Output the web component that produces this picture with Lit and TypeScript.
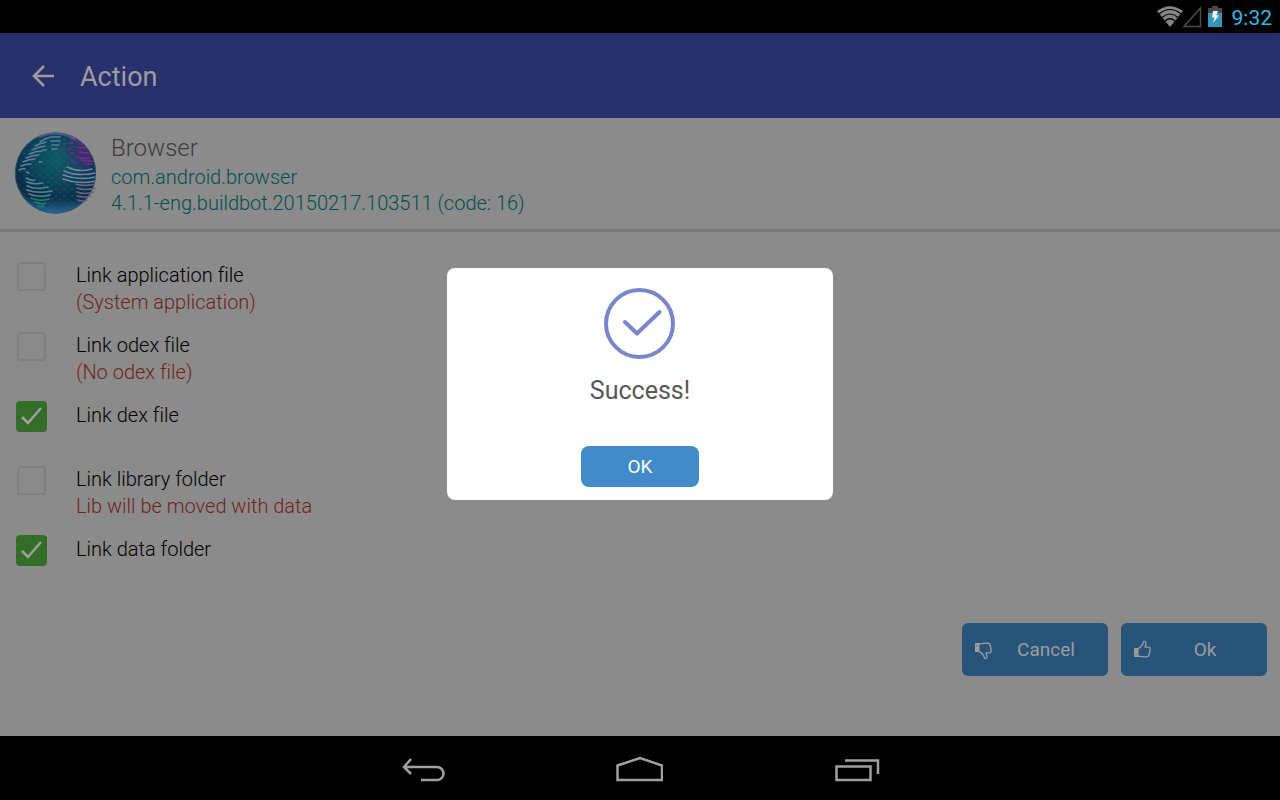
import { LitElement, html, css, svg } from "lit";
import { customElement, state } from "lit/decorators.js";

interface LinkOption {
  id: string;
  label: string;
  note?: string;
  checked: boolean;
}

const northLines = [
  "M26 11q5-4 11-5", "M21 15q6-3 11-4", "M18 19q6-3 13-4", "M15 23q7-3 13-3", "M12 27q7-3 13-3",
  "M9 31q6-3 12-3", "M7 35q5-2 10-2", "M5 39q4-2 6-1", "M38 6h8", "M37 10h9", "M38 14h7", "M38 18h5",
  "M29 19h3", "M25 31h3", "M12 41l3 1",
];
const southLines = [
  "M12 47q5 3 9 2", "M13 51q7 3 16 1", "M13 55q9 4 21 1", "M13 59q11 4 25 1", "M15 63q10 4 21 1",
  "M17 67q9 4 18 1", "M21 71q6 3 11 1", "M24 75q4 1 6 0",
];
const africaLines = [
  "M53 36q12 6 25 2", "M50 40q14 6 31 2", "M49 44q16 6 32 2", "M49 48q16 6 32 2", "M62 53q8 3 19 0",
  "M63 57q8 3 18 0", "M63 61q8 3 17 0", "M63 65q7 2 14 0", "M64 69q5 2 9 0",
];
const europeLines = [
  "M49 13h2m5-1h3m6 1h3", "M55 18h2m6-2q5 1 9 1", "M57 22h3m5-1q5 1 10 1", "M62 26q7 2 14 1",
  "M56 29h3m9 0q5 2 10 1", "M55 7q6 1 9 3", "M60 32h2m10 1h6", "M48 19h3",
];

@customElement("app-root")
export class AppRoot extends LitElement {
  static styles = css`
    :host {
      display: block;
      font-family: Roboto, "Noto Sans", sans-serif;
      font-variant-ligatures: none;
      --surface: #8b8b8b;
      --brand: #28306d;
      --action: #285479;
      --muted: #9d9d9d;
    }
    * { box-sizing: border-box; }
    h1, h2, p { margin: 0; font-weight: inherit; }
    svg { display: block; }
    button { font-family: inherit; border: 0; padding: 0; cursor: pointer; }
    .screen {
      display: flex;
      flex-direction: column;
      min-height: 100vh;
      position: relative;
      background: var(--surface);
    }
    .status {
      display: flex;
      align-items: center;
      justify-content: flex-end;
      height: 33px;
      padding-right: 8px;
      background: #000;
    }
    .signal { margin-right: 6px; }
    .clock { margin-left: 10px; font-size: 21px; line-height: 24px; color: #33b5e5; padding-top: 3px; }
    .bar {
      display: flex;
      align-items: center;
      gap: 24px;
      height: 85px;
      padding: 0 30px;
      background: linear-gradient(#232a60, var(--brand) 8px);
      color: var(--muted);
    }
    .back { background: none; color: inherit; }
    .bar h1 { font-size: 27px; line-height: 32px; padding-top: 2px; }
    .info {
      display: flex;
      gap: 14px;
      padding: 13px 14px;
      border-bottom: 3px solid #7a7a7a;
      font-weight: 300;
    }
    .info h2 { font-size: 24px; line-height: 31px; color: #3c3c3c; padding-top: 2px; }
    .info p { font-size: 20px; line-height: 26px; color: #00504b; }
    .options {
      display: flex;
      flex-direction: column;
      gap: 15px;
      padding: 29px 16px 0;
      flex: 1;
    }
    .option { display: flex; gap: 29px; min-height: 49px; }
    .tick { display: grid; width: 31px; height: 31px; }
    .tick > * { grid-area: 1 / 1; }
    .tick input {
      appearance: none;
      margin: 1px;
      border: 2px solid #808080;
      border-radius: 4px;
    }
    .tick input:checked { margin: 0; border: 0; background: #346d29; }
    .tick svg { pointer-events: none; }
    .option label {
      padding-top: 1px;
      font-size: 20px;
      line-height: 27px;
      font-weight: 300;
      color: #000;
    }
    .note { display: block; color: #701f1f; }
    .actions {
      display: flex;
      justify-content: flex-end;
      gap: 13px;
      padding: 0 13px 60px;
    }
    .action {
      display: flex;
      align-items: center;
      width: 146px;
      height: 53px;
      padding: 0 12px;
      border-radius: 6px;
      background: var(--action);
      color: var(--muted);
      font-size: 19px;
    }
    .action span { flex: 1; padding-left: 2px; }
    .nav {
      display: flex;
      justify-content: center;
      align-items: center;
      gap: 169px;
      height: 64px;
      padding-top: 4px;
      background: #000;
    }
    .nav button { background: none; }
    .overlay {
      position: absolute;
      inset: 0;
      display: flex;
      align-items: center;
      justify-content: center;
      padding-bottom: 32px;
    }
    .dialog {
      display: flex;
      flex-direction: column;
      align-items: center;
      width: 386px;
      max-width: 100%;
      padding: 20px 20px 13px;
      border-radius: 8px;
      background: #fff;
    }
    .dialog h2 { margin: 16px 0 39px; font-size: 25px; line-height: 32px; color: #575757; }
    .confirm {
      width: 118px;
      height: 41px;
      border-radius: 8px;
      background: #428bca;
      color: #fff;
      font-size: 19px;
    }
  `;

  @state() private open = true;
  @state() private options: LinkOption[] = [
    { id: "app", label: "Link application file", note: "(System application)", checked: false },
    { id: "odex", label: "Link odex file", note: "(No odex file)", checked: false },
    { id: "dex", label: "Link dex file", checked: true },
    { id: "lib", label: "Link library folder", note: "Lib will be moved with data", checked: false },
    { id: "data", label: "Link data folder", checked: true },
  ];

  private toggle(id: string) {
    this.options = this.options.map((o) => (o.id === id ? { ...o, checked: !o.checked } : o));
  }

  private globe() {
    return html`<svg width="83" height="84" viewBox="0 0 83 84" fill="none" aria-hidden="true">
      <defs>
        <radialGradient id="sea" cx=".53" cy=".32" r=".68">
          <stop offset="0" stop-color="#105c68" /><stop offset=".5" stop-color="#0b4158" />
          <stop offset=".85" stop-color="#0a2a42" /><stop offset="1" stop-color="#16486b" />
        </radialGradient>
        <linearGradient id="glow" x1="0" y1="0" x2="0" y2="1">
          <stop offset=".8" stop-color="#206084" stop-opacity="0" /><stop offset="1" stop-color="#226590" />
        </linearGradient>
        <radialGradient id="violet" cx=".87" cy=".24" r=".26">
          <stop offset="0" stop-color="#5a2076" stop-opacity=".75" /><stop offset="1" stop-color="#5a2076" stop-opacity="0" />
        </radialGradient>
        <pattern id="dots" width="8" height="7" patternUnits="userSpaceOnUse">
          <path d="M1 2h3M5 5h2" stroke="#267998" stroke-opacity=".4" />
        </pattern>
      </defs>
      <circle cx="41.500" cy="42" r="40.500" fill="url(#sea)" />
      <circle cx="41.500" cy="42" r="38" fill="url(#dots)" />
      <circle cx="41.500" cy="42" r="40.500" fill="url(#glow)" />
      <circle cx="41.500" cy="42" r="40.500" fill="url(#violet)" />
      <g stroke-width="1.500" stroke-linecap="round">
        ${northLines.map((d) => svg`<path d=${d} stroke="#607e98" />`)}
        ${southLines.map((d, i) => svg`<path d=${d} stroke=${i > 4 ? "#237b76" : "#56838f"} />`)}
        ${africaLines.map((d, i) => svg`<path d=${d} stroke=${i > 3 ? "#696788" : "#78849f"} />`)}
        ${europeLines.map((d) => svg`<path d=${d} stroke="#742d8c" />`)}
      </g>
      <circle cx="41.500" cy="42" r="40" stroke="#2c5574" stroke-opacity=".7" />
      <path d="M25 6Q42-2 62 8" stroke="#505a8c" stroke-width="2" />
    </svg>`;
  }

  private thumb(down: boolean) {
    return html`<svg width="20" height="20" viewBox="0 0 20 20" fill="none" aria-hidden="true">
      <g transform=${down ? "matrix(1 0 0 -1 1 20)" : "matrix(1 0 0 1 1 0)"} stroke="currentColor" stroke-width="1.300" stroke-linejoin="round">
        <path d="M.5 8.500h3.500v8H.5z" fill="currentColor" stroke-width="1" />
        <path d="M4 8.500c2.600-.6 3.800-2.800 4.700-4.300.5-1 .3-2.800 1.500-2.800 1.500 0 2 1.300 1.700 2.700-.2 1.200-.9 2-.9 3.100h3.500c1.600 0 2 1.200 1.400 2.300.4.900.3 1.800-.2 2.500.2 1 0 1.700-.6 2.300 0 1.900-.9 2.600-2.900 2.600-3.200 0-5-.4-8.200-.8" />
        <path d="M1.500 14.500h1" stroke="#285479" stroke-width="1.200" />
      </g>
    </svg>`;
  }

  render() {
    return html`<div class="screen">
      <div class="status">
        <svg class="signal" width="45" height="24" viewBox="0 0 45 24" fill="none" aria-hidden="true">
          <path d="M13 22L0 6Q13-3.500 26 6z" fill="#858585" />
          <path d="M2 9q11-9 22 0M5 12.500q8-7 16 0M8 16q5-4.500 10 0" stroke="#000" stroke-width="1.200" />
          <path d="M27 21.500H43.500V3z" stroke="#4c4c4c" stroke-width="1.500" />
        </svg>
        <svg width="14" height="24" viewBox="0 0 14 24" aria-hidden="true">
          <path d="M4 1h6v2h4v7H0V3h4z" fill="#484848" />
          <path d="M0 8h14v14H0z" fill="#3595bd" />
          <path d="M5 6h5L8.500 10.500H11L5 18l1.500-5.500H4z" fill="#e8f4f8" />
        </svg>
        <span class="clock">9:32</span>
      </div>
      <header class="bar">
        <button class="back" aria-label="Back">
          <svg width="26" height="26" viewBox="0 0 26 26" fill="none" stroke="currentColor" stroke-width="2.500">
            <path d="M24 13H4M14 3L4 13l10 10" />
          </svg>
        </button>
        <h1>Action</h1>
      </header>
      <section class="info">
        ${this.globe()}
        <div>
          <h2>Browser</h2>
          <p>com.android.browser</p>
          <p>4.1.1-eng.buildbot.20150217.103511 (code: 16)</p>
        </div>
      </section>
      <main class="options">
        ${this.options.map(
          (o) => html`<div class="option">
            <span class="tick">
              <input type="checkbox" id=${o.id} .checked=${o.checked} @change=${() => this.toggle(o.id)} />
              ${o.checked
                ? html`<svg width="31" height="31" viewBox="0 0 31 31" fill="none" stroke="#a0a0a0" stroke-width="2.500" aria-hidden="true">
                    <path d="M6 16l6 6L25 7" />
                  </svg>`
                : ""}
            </span>
            <label for=${o.id}>${o.label}${o.note ? html`<span class="note">${o.note}</span>` : ""}</label>
          </div>`,
        )}
      </main>
      <div class="actions">
        <button class="action">${this.thumb(true)}<span>Cancel</span></button>
        <button class="action">${this.thumb(false)}<span>Ok</span></button>
      </div>
      <nav class="nav">
        <button aria-label="Back">
          <svg width="46" height="28" viewBox="0 0 46 28" fill="none" stroke="#a0a0a0" stroke-width="2.500">
            <path d="M11 3L4 11l7 7M4 11h33a6.500 6.500 0 0 1 0 13H21" />
          </svg>
        </button>
        <button aria-label="Home">
          <svg width="48" height="28" viewBox="0 0 48 28" fill="none" stroke="#a0a0a0" stroke-width="2.500">
            <path d="M2.500 24V9.500L25 2l22 7.500V24z" />
          </svg>
        </button>
        <button aria-label="Recent apps">
          <svg width="48" height="28" viewBox="0 0 48 28" fill="none" stroke="#a0a0a0" stroke-width="2.500">
            <path d="M4.500 10.500h34V24h-34zM13 4.500h33V18" />
          </svg>
        </button>
      </nav>
      ${this.open
        ? html`<div class="overlay">
            <div class="dialog" role="dialog" aria-labelledby="result">
              <svg width="72" height="71" viewBox="0 0 72 71" fill="none" stroke="#7986cb" stroke-width="4" aria-hidden="true">
                <circle cx="35.500" cy="35.500" r="33.500" />
                <path d="M21 34L33 45.500L55.500 24" stroke-linecap="round" stroke-linejoin="round" />
              </svg>
              <h2 id="result">Success!</h2>
              <button class="confirm" @click=${() => (this.open = false)}>OK</button>
            </div>
          </div>`
        : ""}
    </div>`;
  }
}
